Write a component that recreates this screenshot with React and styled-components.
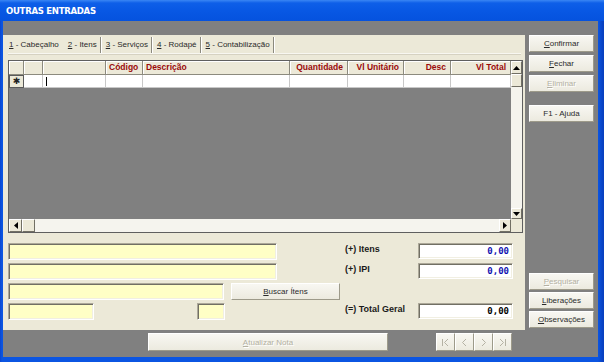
import React from 'react';
import styled, { createGlobalStyle } from 'styled-components';

const Global = createGlobalStyle`
  html, body { margin: 0; padding: 0; background: #ffffff; }
  body { font-family: "Liberation Sans", Arial, sans-serif; }
  #root { width: 604px; height: 362px; }
`;

const UI = `"Liberation Sans", Arial, sans-serif`;
const INK = '#2a2a2a';

const Window = styled.div`
  width: 604px;
  height: 362px;
  box-sizing: border-box;
  display: flex;
  flex-direction: column;
  background: linear-gradient(to right, #0a46d0 0, #0b55e2 2px, #0b55e2 598px, #0840c0 603px);
  overflow: hidden;
`;

const TitleBar = styled.div`
  height: 21px;
  flex: none;
  display: flex;
  align-items: center;
  padding-left: 6px;
  background: linear-gradient(to bottom, #3a86f4 0, #0e5fe8 3px, #0858e4 50%, #0552de 100%);
  color: #ffffff;
  font-family: "DejaVu Sans Condensed", "DejaVu Sans", sans-serif;
  font-stretch: condensed;
  font-weight: bold;
  font-size: 9.5px;
  letter-spacing: -0.3px;
`;

const Body = styled.div`
  flex: 1;
  margin: 0 6px 5px 3px;
  background: #808080;
  display: flex;
  flex-direction: column;
  padding-top: 14px;
`;

const MainRow = styled.div`
  display: flex;
  gap: 4px;
  height: 295px;
`;

const Panel = styled.div`
  width: 522px;
  box-sizing: border-box;
  background: #ece9d8;
  display: flex;
  flex-direction: column;
  padding: 2px 2px 0 5px;
`;

const TabStrip = styled.div`
  display: flex;
  height: 16px;
  margin-right: 2px;
  border-bottom: 1px solid #f8f7f1;
  box-shadow: 0 1px 0 #d6d2c2;
`;

const Tab = styled.div`
  padding: 0 3px 0 ${p => (p.$first ? 1 : 4)}px;
  font: 8px ${UI};
  line-height: 16px;
  color: ${INK};
  white-space: nowrap;
  border-right: 1px solid ${p => (p.$sep ? '#8c8a7e' : 'transparent')};
  box-shadow: ${p => (p.$sep ? '1px 0 0 #ffffff' : 'none')};
  margin-right: 1px;
  u { text-decoration: underline; }
`;

const Grid = styled.div`
  margin-top: 6px;
  width: 515px;
  height: 173px;
  box-sizing: border-box;
  border: 1px solid #5f5f5f;
  background: #808080;
  display: grid;
  grid-template-columns: 1fr 11px;
  grid-template-rows: 1fr 13px;
`;

const DataArea = styled.div`
  overflow: hidden;
`;

const COLS = '15px 19px 63px 37px 147px 58px 56px 47px 60px';

const HeaderRow = styled.div`
  display: grid;
  grid-template-columns: ${COLS};
  height: 14px;
`;

const HeadCell = styled.div`
  box-sizing: border-box;
  background: #ece9d8;
  border-right: 1px solid #8c8a7e;
  border-bottom: 1px solid #8c8a7e;
  box-shadow: inset 1px 1px 0 #ffffff;
  color: #9a0a0a;
  font: bold 8.5px ${UI};
  line-height: 13px;
  padding: 0 ${p => (p.$right ? 4 : 0)}px 0 ${p => (p.$right ? 0 : 3)}px;
  text-align: ${p => (p.$right ? 'right' : 'left')};
  white-space: nowrap;
  overflow: hidden;
`;

const DataRow = styled.div`
  display: grid;
  grid-template-columns: ${COLS};
  height: 13px;
`;

const Cell = styled.div`
  box-sizing: border-box;
  background: #ffffff;
  border-right: 1px solid #c8c8c8;
  border-bottom: 1px solid #c8c8c8;
  position: relative;
`;

const Indicator = styled.div`
  box-sizing: border-box;
  background: #ece9d8;
  border: 1px solid #5a5a5a;
  display: flex;
  align-items: center;
  justify-content: center;
  font: 9px "DejaVu Sans", sans-serif;
  line-height: 1;
  color: #222;
`;

const Caret = styled.div`
  position: absolute;
  left: 3px;
  top: 2px;
  width: 1px;
  height: 9px;
  background: #000;
`;

const VScroll = styled.div`
  display: flex;
  flex-direction: column;
  background: #f5f4ee;
`;

const HScroll = styled.div`
  display: flex;
  background: #f5f4ee;
`;

const SBtn = styled.div`
  box-sizing: border-box;
  flex: none;
  width: ${p => p.$w}px;
  height: ${p => p.$h}px;
  background: #ece9d8;
  border: 1px solid;
  border-color: #ffffff #716f64 #716f64 #ffffff;
  display: flex;
  align-items: center;
  justify-content: center;
`;

const Track = styled.div`
  flex: 1;
`;

const Corner = styled.div`
  background: #ece9d8;
`;

const Bottom = styled.div`
  margin-top: 10px;
  display: flex;
`;

const LeftCol = styled.div`
  width: 337px;
  display: flex;
  flex-direction: column;
  gap: 3px;
`;

const FormRow = styled.div`
  display: flex;
  height: 17px;
  gap: ${p => p.$gap || 0}px;
`;

const Field = styled.div`
  box-sizing: border-box;
  width: ${p => p.$w}px;
  height: ${p => p.$h || 17}px;
  background: ${p => p.$bg || '#ffffc6'};
  border: 1px solid;
  border-color: #aca899 #ffffff #ffffff #aca899;
  box-shadow: inset 1px 1px 0 #716f64, inset -1px -1px 0 #f1efe2;
  display: flex;
  align-items: center;
  justify-content: flex-end;
  padding-right: 3px;
  font: bold 9px "DejaVu Sans Mono", "Liberation Mono", monospace;
  color: ${p => p.$color || '#000'};
`;

const Btn = styled.button`
  box-sizing: border-box;
  flex: none;
  width: ${p => p.$w || 65}px;
  height: ${p => p.$h || 17}px;
  margin: 0;
  padding: 0;
  font: 8px ${UI};
  color: ${p => (p.disabled ? '#b3b0a2' : INK)};
  text-shadow: ${p => (p.disabled ? '1px 1px 0 #ffffff' : 'none')};
  background: linear-gradient(to bottom, #f8f7f2, #eceadf);
  border: 1px solid;
  border-color: #ffffff #9d9a8a #9d9a8a #ffffff;
  display: flex;
  align-items: center;
  justify-content: center;
  cursor: default;
  u { text-decoration: underline; }
`;

const RightCol = styled.div`
  display: flex;
  flex-direction: column;
  gap: 3px;
`;

const TotalRow = styled.div`
  display: flex;
  align-items: flex-start;
  height: 17px;
`;

const Label = styled.div`
  width: 73px;
  font: bold 9px ${UI};
  line-height: 12px;
  color: #1a1a1a;
  white-space: nowrap;
`;

const ButtonCol = styled.div`
  display: flex;
  flex-direction: column;
  gap: 3px;
`;

const LowerGroup = styled.div`
  margin-top: auto;
  display: flex;
  flex-direction: column;
  gap: 2px;
  padding-bottom: 2px;
`;

const Spacer = styled.div`
  height: ${p => p.$h}px;
`;

const BottomBar = styled.div`
  display: flex;
  align-items: flex-start;
  padding: 3px 0 0 145px;
  gap: 48px;
`;

const Nav = styled.div`
  display: flex;
`;

const Arrow = ({ dir }) => {
  const pts = {
    up: '0,4 3.5,0 7,4',
    down: '0,0 3.5,4 7,0',
    left: '4,0 0,3.5 4,7',
    right: '0,0 4,3.5 0,7',
  }[dir];
  const vert = dir === 'up' || dir === 'down';
  return (
    <svg width={vert ? 7 : 4} height={vert ? 4 : 7} viewBox={vert ? '0 0 7 4' : '0 0 4 7'}>
      <polygon points={pts} fill="#000" />
    </svg>
  );
};

const NavIcon = ({ kind }) => {
  const c = '#b5b2a4';
  return (
    <svg width="9" height="9" viewBox="0 0 9 9">
      {kind === 'first' && (
        <>
          <line x1="1.5" y1="1" x2="1.5" y2="8" stroke={c} />
          <polyline points="7,1 3.5,4.5 7,8" fill="none" stroke={c} />
        </>
      )}
      {kind === 'prev' && <polyline points="6,1 2.5,4.5 6,8" fill="none" stroke={c} />}
      {kind === 'next' && <polyline points="3,1 6.5,4.5 3,8" fill="none" stroke={c} />}
      {kind === 'last' && (
        <>
          <polyline points="2,1 5.5,4.5 2,8" fill="none" stroke={c} />
          <line x1="7.5" y1="1" x2="7.5" y2="8" stroke={c} />
        </>
      )}
    </svg>
  );
};

const headers = [
  { t: '' },
  { t: '' },
  { t: '' },
  { t: 'Código' },
  { t: 'Descrição' },
  { t: 'Quantidade', r: true },
  { t: 'Vl Unitário', r: true },
  { t: 'Desc', r: true },
  { t: 'Vl Total', r: true },
];

export default function App() {
  return (
    <>
      <Global />
      <Window>
        <TitleBar>OUTRAS ENTRADAS</TitleBar>
        <Body>
          <MainRow>
            <Panel>
              <TabStrip>
                <Tab $first><u>1</u> - Cabeçalho</Tab>
                <Tab $sep><u>2</u> - Itens</Tab>
                <Tab $sep><u>3</u> - Serviços</Tab>
                <Tab $sep><u>4</u> - Rodapé</Tab>
                <Tab $sep><u>5</u> - Contabilização</Tab>
              </TabStrip>

              <Grid>
                <DataArea>
                  <HeaderRow>
                    {headers.map((h, i) => (
                      <HeadCell key={i} $right={h.r}>{h.t}</HeadCell>
                    ))}
                  </HeaderRow>
                  <DataRow>
                    <Indicator>✱</Indicator>
                    <Cell />
                    <Cell><Caret /></Cell>
                    <Cell />
                    <Cell />
                    <Cell />
                    <Cell />
                    <Cell />
                    <Cell />
                  </DataRow>
                </DataArea>
                <VScroll>
                  <SBtn $w={11} $h={13}><Arrow dir="up" /></SBtn>
                  <SBtn $w={11} $h={13} />
                  <Track />
                  <SBtn $w={11} $h={11}><Arrow dir="down" /></SBtn>
                </VScroll>
                <HScroll>
                  <SBtn $w={13} $h={13}><Arrow dir="left" /></SBtn>
                  <SBtn $w={13} $h={13} />
                  <Track />
                  <SBtn $w={12} $h={13}><Arrow dir="right" /></SBtn>
                </HScroll>
                <Corner />
              </Grid>

              <Bottom>
                <LeftCol>
                  <FormRow><Field $w={269} /></FormRow>
                  <FormRow><Field $w={269} /></FormRow>
                  <FormRow $gap={7}>
                    <Field $w={216} />
                    <Btn $w={109}><span><u>B</u>uscar Ítens</span></Btn>
                  </FormRow>
                  <FormRow $gap={103}>
                    <Field $w={86} />
                    <Field $w={28} />
                  </FormRow>
                </LeftCol>
                <RightCol>
                  <TotalRow>
                    <Label>(+) Itens</Label>
                    <Field $w={95} $h={16} $bg="#ffffff" $color="#1010b0">0,00</Field>
                  </TotalRow>
                  <TotalRow>
                    <Label>(+) IPI</Label>
                    <Field $w={95} $h={16} $bg="#ffffff" $color="#1010b0">0,00</Field>
                  </TotalRow>
                  <TotalRow />
                  <TotalRow>
                    <Label>(=) Total Geral</Label>
                    <Field $w={95} $h={16} $bg="#ffffff" $color="#000">0,00</Field>
                  </TotalRow>
                </RightCol>
              </Bottom>
            </Panel>

            <ButtonCol>
              <Btn><span><u>C</u>onfirmar</span></Btn>
              <Btn><span><u>F</u>echar</span></Btn>
              <Btn disabled><span><u>E</u>liminar</span></Btn>
              <Spacer $h={7} />
              <Btn><span>F1 - Ajuda</span></Btn>
              <LowerGroup>
                <Btn disabled><span><u>P</u>esquisar</span></Btn>
                <Btn><span><u>L</u>iberações</span></Btn>
                <Btn><span><u>O</u>bservações</span></Btn>
              </LowerGroup>
            </ButtonCol>
          </MainRow>

          <BottomBar>
            <Btn disabled $w={240} $h={18}><span><u>A</u>tualizar Nota</span></Btn>
            <Nav>
              <Btn disabled $w={19} $h={18}><NavIcon kind="first" /></Btn>
              <Btn disabled $w={19} $h={18}><NavIcon kind="prev" /></Btn>
              <Btn disabled $w={19} $h={18}><NavIcon kind="next" /></Btn>
              <Btn disabled $w={19} $h={18}><NavIcon kind="last" /></Btn>
            </Nav>
          </BottomBar>
        </Body>
      </Window>
    </>
  );
}
